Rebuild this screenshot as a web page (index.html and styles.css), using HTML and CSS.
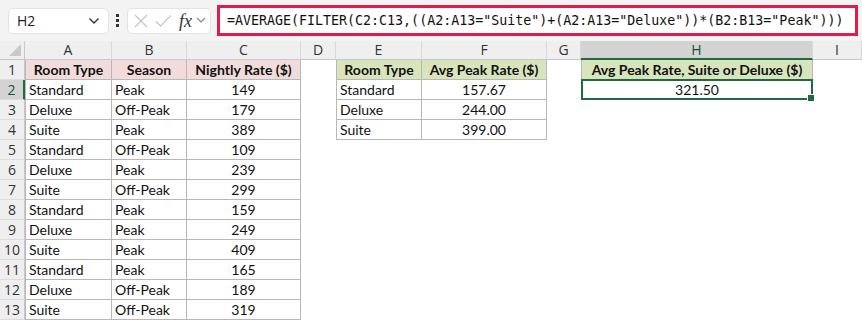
FILE: index.html
```html
<!DOCTYPE html>
<html lang="en">

<head>
  <meta charset="UTF-8">
  <meta name="viewport" content="width=device-width, initial-scale=1.0">
  <title>Average Peak Rate</title>
  <link rel="stylesheet" href="styles.css">
</head>

<body>
  <div id="toolbar">
    <div class="name-box">
      <span>H2</span>
      <svg class="chev" width="12" height="8" viewBox="0 0 12 8"><path d="M1.5 1.5 L6 6 L10.5 1.5" fill="none" stroke="#333" stroke-width="1.4"/></svg>
    </div>
    <div class="dots"><i></i><i></i><i></i></div>
    <div class="fx-box">
      <svg class="x-ico" width="14" height="14" viewBox="0 0 14 14"><path d="M1 1 L13 13 M13 1 L1 13" stroke="#c4c4c4" stroke-width="1.2"/></svg>
      <svg class="ok-ico" width="17" height="14" viewBox="0 0 17 14"><path d="M1 7.5 L5.5 12 L16 1.5" fill="none" stroke="#c4c4c4" stroke-width="1.2"/></svg>
      <span class="fx">fx</span>
      <svg class="fx-chev" width="10" height="7" viewBox="0 0 10 7"><path d="M1 1 L5 5 L9 1" fill="none" stroke="#888" stroke-width="1.2"/></svg>
    </div>
    <div class="formula">=AVERAGE(FILTER(C2:C13,((A2:A13="Suite")+(A2:A13="Deluxe"))*(B2:B13="Peak")))</div>
  </div>

  <div id="sheet">
    <div class="ch corner"><span class="tri"></span></div>
    <div class="ch">A</div>
    <div class="ch">B</div>
    <div class="ch">C</div>
    <div class="ch">D</div>
    <div class="ch">E</div>
    <div class="ch">F</div>
    <div class="ch">G</div>
    <div class="ch sel">H</div>
    <div class="ch">I</div>
  </div>

  <script>
    const rows = [
      ['Standard', 'Peak', 149], ['Deluxe', 'Off-Peak', 179], ['Suite', 'Peak', 389],
      ['Standard', 'Off-Peak', 109], ['Deluxe', 'Peak', 239], ['Suite', 'Off-Peak', 299],
      ['Standard', 'Peak', 159], ['Deluxe', 'Peak', 249], ['Suite', 'Peak', 409],
      ['Standard', 'Peak', 165], ['Deluxe', 'Off-Peak', 189], ['Suite', 'Off-Peak', 319]
    ]
    const avg = [['Standard', '157.67'], ['Deluxe', '244.00'], ['Suite', '399.00']]
    const sheet = document.querySelector('#sheet')

    const cell = (text, cls) => {
      let d = document.createElement('div')
      d.className = 'cell ' + (cls || '')
      d.textContent = text
      sheet.appendChild(d)
    }

    // row 1 : headers
    cell('1', 'rh')
    cell('Room Type', 'b bl hd pink')
    cell('Season', 'b hd pink')
    cell('Nightly Rate ($)', 'b hd pink')
    cell('')
    cell('Room Type', 'b bl hd green')
    cell('Avg Peak Rate ($)', 'b hd green')
    cell('')
    cell('Avg Peak Rate, Suite or Deluxe ($)', 'b bl hd green')
    cell('')

    rows.forEach((r, i) => {
      let n = i + 2
      cell(n, n == 2 ? 'rh sel' : 'rh')
      cell(r[0], 'b bl')
      cell(r[1], 'b')
      cell(r[2], 'b num')
      cell('')
      if (avg[i]) {
        cell(avg[i][0], 'b bl')
        cell(avg[i][1], 'b num')
      } else {
        cell('')
        cell('')
      }
      cell('')
      cell(n == 2 ? '321.50' : '', n == 2 ? 'num active' : '')
      cell('')
    })
  </script>
</body>

</html>
```

FILE: styles.css
```css
body {
  margin: 0;
  background: #fff;
  font-family: Lato, "Liberation Sans", sans-serif;
  overflow: hidden;
}

#toolbar {
  display: flex;
  align-items: center;
  height: 41px;
  padding: 0 4px 0 8px;
  box-sizing: border-box;
  background: #f3f3f3;
}

#toolbar > * {
  flex-shrink: 0;
}

.name-box {
  display: flex;
  justify-content: space-between;
  align-items: center;
  width: 101px;
  height: 26px;
  padding: 0 8px 0 8px;
  box-sizing: border-box;
  background: #fff;
  border: 1px solid #e3e3e3;
  border-radius: 5px;
  font-family: "Open Sans", "Liberation Sans", sans-serif;
  font-size: 14px;
  color: #222;
}

.dots {
  display: flex;
  flex-direction: column;
  gap: 2px;
  margin: 0 8px 0 7px;
}

.dots i {
  width: 3px;
  height: 3px;
  background: #333;
}

.fx-box {
  display: flex;
  align-items: center;
  width: 84px;
  height: 26px;
  padding: 0 0 0 6px;
  box-sizing: border-box;
  background: #fff;
  border: 1px solid #e3e3e3;
  border-radius: 5px;
}

.fx-box > * {
  flex-shrink: 0;
}

.ok-ico {
  margin-left: 7px;
}

.fx {
  margin-left: 7px;
  font-family: "Liberation Serif", serif;
  font-style: italic;
  font-size: 18px;
  line-height: 20px;
  color: #333;
}

.fx-chev {
  margin-left: 4px;
}

.formula {
  flex: 1;
  flex-shrink: 1;
  height: 31px;
  margin-left: 6px;
  margin-top: -1px;
  padding-left: 7px;
  box-sizing: border-box;
  border: 3px solid #e8184b;
  background: #fff;
  font-family: "DejaVu Sans Mono", monospace;
  font-size: 13.3px;
  line-height: 25px;
  color: #111;
  white-space: nowrap;
}

#sheet {
  display: grid;
  grid-template-columns: 25px 87px 75px 114px 35px 86px 125px 34px 232px 49px;
  grid-template-rows: 19px repeat(13, 20px);
}

.ch {
  position: relative;
  background: #efefef;
  border-right: 1px solid #d8d8d8;
  border-bottom: 1px solid #c8c8c8;
  box-sizing: border-box;
  text-align: center;
  font-family: "Open Sans", "Liberation Sans", sans-serif;
  font-size: 14px;
  line-height: 18px;
  color: #333;
}

.ch.sel {
  background: #d3d3d3;
  border-bottom: 2px solid #1d6b40;
  color: #14532f;
}

.corner {
  border-right: 1px solid #c8c8c8;
}

.tri {
  position: absolute;
  right: 3px;
  bottom: 3px;
  width: 0;
  height: 0;
  border-left: 12px solid transparent;
  border-bottom: 12px solid #c9c9c9;
}

.cell {
  position: relative;
  box-sizing: border-box;
  padding: 0 3px;
  font-size: 14px;
  line-height: 20px;
  color: #111;
  white-space: nowrap;
  overflow: visible;
}

.rh {
  padding: 0;
  background: #efefef;
  border-right: 1px solid #c8c8c8;
  border-bottom: 1px solid #dcdcdc;
  text-align: center;
  font-family: "Open Sans", "Liberation Sans", sans-serif;
  font-size: 14px;
  color: #333;
}

.rh.sel {
  background: #d3d3d3;
  border-right: 2px solid #1d6b40;
  color: #14532f;
}

.b {
  border-right: 1px solid #b8b8b8;
  border-bottom: 1px solid #b8b8b8;
}

.bl {
  border-left: 1px solid #b8b8b8;
}

.hd {
  font-weight: bold;
  text-align: center;
}

.pink {
  background: #f2dcdb;
}

.green {
  background: #d8e4bc;
}

.num {
  text-align: center;
}

.active {
  border: 2px solid #1d6b40;
  margin-top: -1px;
  line-height: 17px;
}

.active::after {
  content: '';
  position: absolute;
  right: -4px;
  bottom: -4px;
  width: 6px;
  height: 6px;
  background: #1d6b40;
  border: 1px solid #fff;
}
```
